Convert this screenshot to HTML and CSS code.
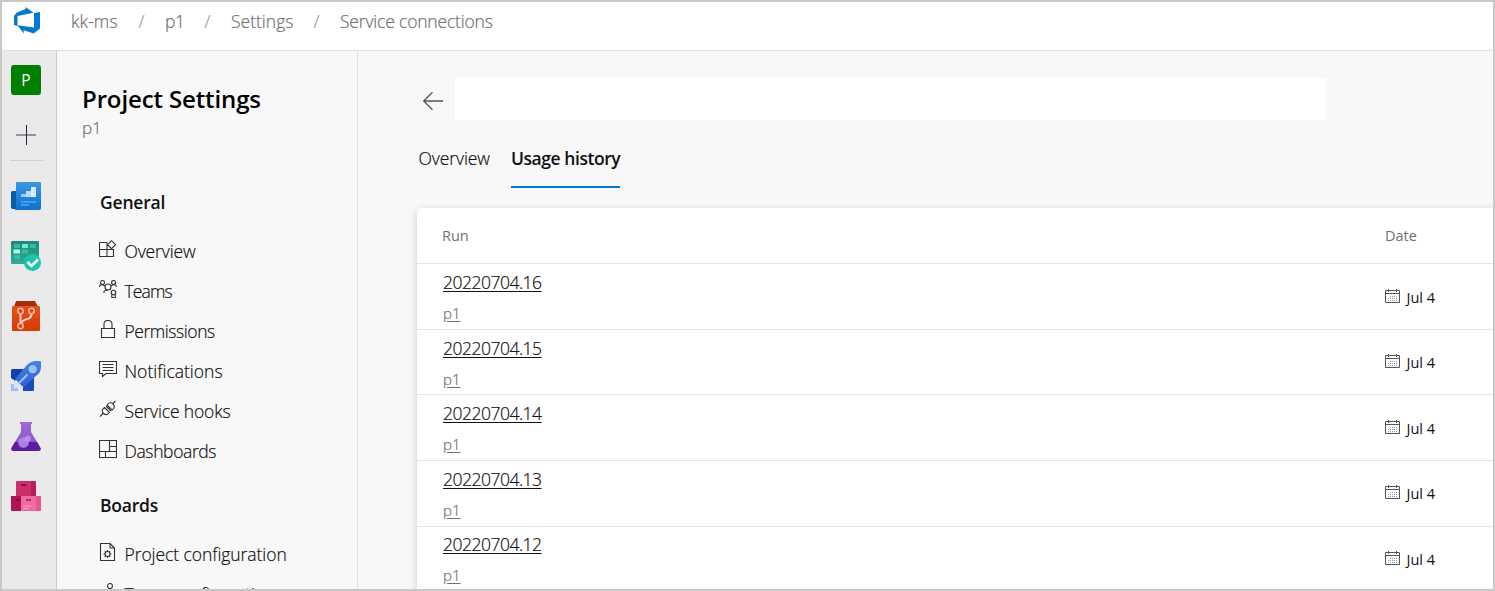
FILE: index.html
```html
<!DOCTYPE html>
<html lang="en">
<head>
<meta charset="utf-8">
<title>Service connections - Settings</title>
<link rel="stylesheet" href="styles.css">
</head>
<body>
<svg width="0" height="0" class="defs">
  <defs>
    <linearGradient id="gBlue" x1="0" y1="0" x2="0" y2="1"><stop offset="0" stop-color="#3f97e3"/><stop offset="1" stop-color="#0c71cf"/></linearGradient>
    <linearGradient id="gTeal" x1="0" y1="0" x2="0" y2="1"><stop offset="0" stop-color="#20877a"/><stop offset="1" stop-color="#2fae92"/></linearGradient>
    <linearGradient id="gRed" x1="0" y1="0" x2="0" y2="1"><stop offset="0" stop-color="#e4521b"/><stop offset="1" stop-color="#d63b02"/></linearGradient>
    <linearGradient id="gRocket" x1="0" y1="0" x2="0" y2="1"><stop offset="0" stop-color="#4b83e4"/><stop offset="1" stop-color="#2d62d2"/></linearGradient>
    <linearGradient id="gFlask" x1="0" y1="0" x2="0" y2="1"><stop offset="0" stop-color="#a06bd6"/><stop offset="1" stop-color="#8350c9"/></linearGradient>
    <symbol id="calendar" viewBox="0 0 16 15"><path d="M.5 1.500h14v12H.5zM.5 4.500h14M3.500 0v3M11.500 0v3" fill="none" stroke="#555"/><path d="M5 7.500h8M3 9.500h10M3 11.500h10" stroke="#999" stroke-dasharray="1 1" fill="none"/></symbol>
  </defs>
</svg>
<div class="frame">
  <header class="topbar">
    <svg class="logo" width="28" height="28" viewBox="0 0 28 28"><path fill="#0078d4" d="M1 9 3.500 5.700 12.500 2V0l8 5.800L4.500 9v10L1 18zM27 5v16.500L20.700 26.500 10.700 23.300v3.200L4.500 18.300 21 20.400V6z"/></svg>
    <nav class="crumbs"><span class="c1">kk-ms</span><i>/</i><span class="c2">p1</span><i>/</i><span class="c3">Settings</span><i>/</i><span class="c4">Service connections</span></nav>
  </header>
  <div class="body">
    <aside class="rail">
      <div class="avatar">P</div>
      <svg class="plus" width="20" height="20" viewBox="0 0 20 20"><path d="M0 10h20" stroke="#777" stroke-width="1.500"/><path d="M10.500 0v20" stroke="#3b1747"/></svg>
      <div class="sep"></div>
      <div class="apps">
      <svg width="30" height="30" viewBox="0 0 30 30"><path fill="#0a5ba9" d="M0 11l1-1h5v18H2q-2 0-2-2z"/><path fill="url(#gBlue)" d="M5 2q0-1 1-1h23q1 0 1 1v25q0 2-2 2H3q2 0 2-2z"/><path fill="#9dccf7" d="M10 13h5v3h-5z"/><path fill="#b7dafa" d="M15 10h5v6h-5z"/><path fill="#d7ecff" d="M20 6h5v10h-5z"/><path d="M10 21h15M10 24h8" stroke="#7db9ef" stroke-width="1"/></svg>
      <svg width="30" height="30" viewBox="0 0 30 30"><rect y="0" width="28" height="23" rx="1" fill="url(#gTeal)"/><path fill="#35bda0" d="M3 3h6v4H3zM19 3h6v4h-6zM11 8.500h6v4h-6zM3 14h6v4H3z"/><path fill="#73ebcf" d="M11 3h6v4h-6z"/><path fill="#a0fff0" d="M2.500 8.500h6.500v4H2.500z"/><circle cx="21.500" cy="21.500" r="8.500" fill="#1bc5ad"/><path d="M16.500 21l4 4 6.500-6.500" fill="none" stroke="#fff" stroke-width="2.500"/></svg>
      <svg width="30" height="30" viewBox="0 0 30 30"><path fill="#aa2b08" d="M5 0h19l3 6H3z"/><rect x="1" y="5" width="28" height="25" rx="1" fill="url(#gRed)"/><path d="M9.500 12v11M20.500 12q0 5-4 6-5 1-7 5" fill="none" stroke="#ffd5c5" stroke-width="2"/><g fill="#d9481c" stroke="#ffb9a1" stroke-width="1.500"><circle cx="9.500" cy="10" r="2.700"/><circle cx="20.500" cy="10" r="2.700"/><circle cx="9.500" cy="25" r="2.700"/></g></svg>
      <svg width="30" height="30" viewBox="0 0 30 30"><path fill="#123fae" d="M1 8h12L4 20 0 17V9z"/><path fill="#1d4bbb" d="M12 26l11-10v13q0 1-1 1H12z"/><path fill="url(#gRocket)" d="M4 18 16 4q4-4 9-4h4q1 0 1 1v5q0 5-4 8L12 26z"/><circle cx="21.700" cy="8.300" r="4" fill="#9fc1f8"/><path d="M8 22 16 14" stroke="#9fc1f8" stroke-width="2" stroke-linecap="round"/><path fill="#d5e4ff" d="M2 18l4 4 5 3-5 2-3-3z"/><path fill="#9fc1f8" d="M0 23h3v4h4v3H0z"/></svg>
      <svg width="30" height="30" viewBox="0 0 30 30"><path fill="url(#gFlask)" d="M9 1h12v2h-1v8l9 15q2 4-2 4H3q-4 0-2-4l9-15V3H9z"/><path fill="#5c1da5" d="M4 21h22l3 5q2 4-2 4H3q-4 0-2-4z"/><circle cx="12.500" cy="21.500" r="5.300" fill="#b58ae9" opacity=".9"/><circle cx="17" cy="17.500" r="3" fill="#c29af0" opacity=".75"/></svg>
      <svg width="30" height="30" viewBox="0 0 30 30"><path fill="#cc2f6e" d="M5 1q0-1 1-1h14v15H5z"/><path fill="#b91d5b" d="M20 0h4q1 0 1 1v14h-5z"/><path fill="#ae1552" d="M0 15h10v15H1q-1 0-1-1z"/><path fill="#ed6ca3" d="M10 15h15v15H10z"/><path fill="#e35791" d="M25 15h5v14q0 1-1 1h-4z"/><path fill="#8f0a40" d="M10 3h5v2h-5zM5 18h5v2H5z"/><path fill="#c02463" d="M15 18h5v2h-5z"/><path d="M12.500 25h8M12.500 27.500h5" stroke="#f7a5c8"/></svg>
      </div>
    </aside>
    <aside class="side">
      <h1>Project Settings</h1>
      <div class="proj">p1</div>
      <h2 class="general">General</h2>
      <ul>
        <li><svg viewBox="0 0 18 18"><path d="M.5 2.500h7.500M.5 2.500v14h14v-7H.5M8 2.500v14M12.500.7l4 4-4 4-4-4z"/></svg><span class="n1">Overview</span></li>
        <li><svg viewBox="0 0 18 18"><circle cx="3.500" cy="2.500" r="2"/><circle cx="14.500" cy="2.500" r="2"/><circle cx="9" cy="7" r="3"/><circle cx="14.500" cy="12.500" r="2.300"/><path d="M.4 7q0-2 3-2.500L6 6M17.500 7q0-2-3-2.500L12 6M4.800 13q0-3 4-3M12.800 14.500v3h3.500v-3"/></svg><span class="n2">Teams</span></li>
        <li><svg viewBox="0 0 18 18"><path d="M2.500 8.500h13v9h-13zM5 8.500V4q0-3.500 4-3.500T13 4v4.500"/></svg><span class="n3">Permissions</span></li>
        <li><svg viewBox="0 0 18 18"><path d="M.5 1.500h17v12H7l-3.500 3v-3h-3zM3.500 4.500h11M3.500 7.500h11M3.500 10.500h11"/></svg><span class="n4">Notifications</span></li>
        <li><svg viewBox="0 0 18 18"><path d="M1 16.500l3-3M13.500 4l3-3M7 6l5 5M5.500 7.500l5 5q-3 4-6 1t1-6zM8 5q3-4 6-1t-1 6z"/></svg><span class="n5">Service hooks</span></li>
        <li><svg viewBox="0 0 18 18"><path d="M.5.5h17v17H.5zM.5 11.500h17M10.500.5v11M10.500 6.500h7M6.500 11.500v6"/></svg><span class="n6">Dashboards</span></li>
      </ul>
      <h2 class="boards">Boards</h2>
      <ul>
        <li><svg viewBox="0 0 18 18"><path d="M1.500.5h9.500l4.500 4.500v12.500h-14zM11 .5v4.500h4.500"/><circle cx="8.500" cy="11" r="2.500"/><path d="M8.500 7v1.500M8.500 13.500v1.500M4.500 11H6M11 11h1.500M5.800 8.300l1 1M10.300 12.800l1 1M11.200 8.300l-1 1M6.700 12.800l-1 1"/></svg><span class="n7">Project configuration</span></li>
        <li><svg viewBox="0 0 18 18"><circle cx="11" cy="3" r="2.500"/><path d="M6 11q0-5 5-5t5 5"/></svg><span class="n8">Team configuration</span></li>
      </ul>
    </aside>
    <main>
      <div class="titlebar"><svg width="20" height="18" viewBox="0 0 20 18"><path d="M.7 9H20M9.500.3.7 9l8.800 8.700" fill="none" stroke="#555" stroke-width="1.300"/></svg><div class="blank"></div></div>
      <div class="tabs"><span class="t1">Overview</span><span class="t2">Usage history</span></div>
      <section class="card">
        <div class="thead"><span class="h1">Run</span><span class="h2">Date</span></div>
        <div class="row"><div class="run"><a>20220704.16</a><small>p1</small></div><div class="date"><svg><use href="#calendar"/></svg><span>Jul 4</span></div></div>
        <div class="row"><div class="run"><a>20220704.15</a><small>p1</small></div><div class="date"><svg><use href="#calendar"/></svg><span>Jul 4</span></div></div>
        <div class="row"><div class="run"><a>20220704.14</a><small>p1</small></div><div class="date"><svg><use href="#calendar"/></svg><span>Jul 4</span></div></div>
        <div class="row"><div class="run"><a>20220704.13</a><small>p1</small></div><div class="date"><svg><use href="#calendar"/></svg><span>Jul 4</span></div></div>
        <div class="row"><div class="run"><a>20220704.12</a><small>p1</small></div><div class="date"><svg><use href="#calendar"/></svg><span>Jul 4</span></div></div>
      </section>
    </main>
  </div>
</div>
</body>
</html>
```

FILE: styles.css
```css
* { box-sizing: border-box; }
body { margin: 0; overflow: hidden; font-family: "Open Sans", "Noto Sans", sans-serif; color: #111; }
svg { display: block; flex: none; }
.defs { position: absolute; }
.frame { width: 1495px; height: 591px; border: 2px solid #c8c8c8; overflow: hidden; background: #f8f8f8; display: flex; flex-direction: column; }
.topbar { height: 49px; flex: none; display: flex; background: #fff; border-bottom: 1px solid #e0e0e0; padding: 5px 0 0 11px; }
.crumbs { display: flex; margin-left: 30px; line-height: 28px; font-size: 17.500px; font-weight: 300; color: #707070; white-space: nowrap; }
.crumbs i { font-style: normal; color: #999; width: 47px; text-align: center; }
.crumbs, .proj, li, .t1, .run { -webkit-text-stroke-width: .2px; }
.c1 { width: 47px; letter-spacing: .1px; }
.c2 { width: 19px; letter-spacing: -.3px; }
.c3 { width: 62px; letter-spacing: 0; }
.c4 { letter-spacing: -.18px; }
.body { display: flex; flex: 1; min-height: 0; }
.rail { width: 55px; flex: none; background: #eaeaea; border-right: 1px solid #ccc; padding: 14px 0 0 9px; }
.avatar { width: 30px; height: 30px; border-radius: 3px; background: #008000; color: #fff; font-size: 15.500px; line-height: 30px; text-align: center; }
.plus { margin: 30px 0 0 5px; }
.sep { width: 33px; height: 1px; margin: 15px 0 20px -1px; background: #d0d0d0; }
.apps { display: grid; gap: 30px; }
.side { width: 301px; flex: none; border-right: 1px solid #e3e3e3; padding: 31px 0 0 25px; overflow: hidden; white-space: nowrap; }
h1 { margin: 0; height: 34px; line-height: 34px; font-size: 24px; font-weight: 600; letter-spacing: -.12px; color: #000; }
.proj { font-size: 17px; line-height: 24px; height: 24px; font-weight: 300; color: #707070; }
h2 { margin: 0 0 0 18px; height: 30px; line-height: 30px; font-size: 17.500px; font-weight: 600; letter-spacing: -.2px; }
.general { margin-top: 47px; margin-bottom: 14px; }
.boards { margin-top: 19px; margin-bottom: 14px; }
ul { list-style: none; margin: 0; padding: 0 0 0 17px; }
li { display: flex; align-items: center; height: 40px; gap: 7.500px; font-size: 17.500px; font-weight: 300; }
li svg { width: 18px; height: 18px; fill: none; stroke: #333; stroke-width: 1.100; margin-top: -5px; }
.n1 { letter-spacing: -.15px; }
.n2 { letter-spacing: -.85px; }
.n3 { letter-spacing: -.44px; }
.n4 { letter-spacing: 0; }
.n5 { letter-spacing: -.15px; }
.n6 { letter-spacing: -.38px; }
.n7, .n8 { letter-spacing: -.07px; }
main { flex: 1; min-width: 0; padding: 27px 0 0 59px; }
.titlebar { display: flex; align-items: center; height: 42px; padding-left: 6px; }
.titlebar svg { margin-top: 3px; }
.blank { width: 871px; height: 42px; margin-left: 12px; background: #fff; }
.tabs { display: flex; height: 68px; padding-top: 24px; font-size: 17.500px; line-height: 28px; white-space: nowrap; }
.t1 { width: 94px; padding-left: 1.500px; font-weight: 300; letter-spacing: -.1px; }
.t2 { width: 109px; height: 44px; font-weight: 600; letter-spacing: -.45px; border-bottom: 2px solid #0078d4; }
.card { margin-top: 20px; width: 1100px; height: 400px; background: #fff; border-radius: 5px 0 0 0; box-shadow: 0 2px 8px rgba(0,0,0,.18); }
.thead { height: 56.400px; display: flex; border-bottom: 1px solid #e5e5e5; line-height: 55px; padding-left: 25px; font-size: 14.500px; color: #707070; }
.thead .h1 { width: 943px; }
.row { height: 65.550px; display: flex; border-bottom: 1px solid #e5e5e5; padding-left: 26px; }
.run { width: 941.500px; padding-top: 4.600px; display: flex; flex-direction: column; align-items: flex-start; }
.run a { font-size: 17.500px; font-weight: 300; letter-spacing: -.5px; line-height: 26px; text-decoration: underline; text-underline-offset: 2px; text-decoration-thickness: 1px; }
.run small { margin-top: 5px; font-size: 15px; font-weight: 300; line-height: 26px; color: #707070; text-decoration: underline; text-underline-offset: 2px; }
.date { display: flex; align-items: center; gap: 6px; font-size: 14.500px; padding-top: .7px; }
.date svg { width: 16px; height: 15px; margin-top: -2px; }
```
